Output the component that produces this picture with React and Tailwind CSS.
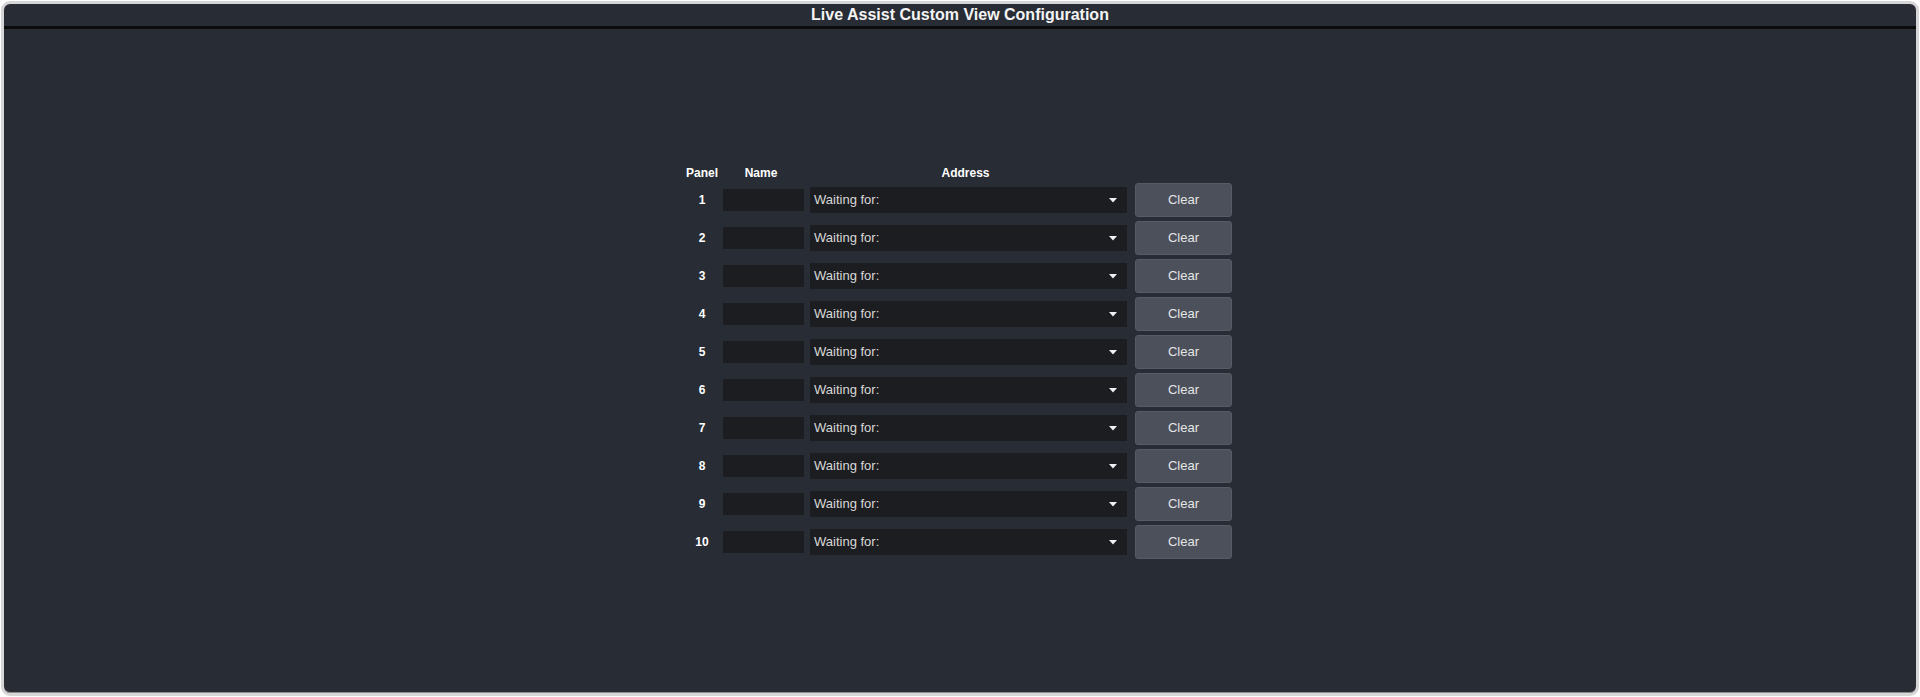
import React from 'react';

const rows = [1, 2, 3, 4, 5, 6, 7, 8, 9, 10];

function Caret() {
  return (
    <svg width="8" height="5" viewBox="0 0 8 5" className="shrink-0">
      <path d="M0 0 L8 0 L4 4.5 Z" fill="#f0f0f0" />
    </svg>
  );
}

function PanelRow({ n }) {
  return (
    <div className="flex items-center h-[34px]">
      <div className="w-[36px] text-center text-[12px] font-bold text-white">{n}</div>
      <div className="ml-[3px] w-[81px] h-[22px] bg-[#1c1d20]" />
      <div className="ml-[6px] w-[317px] h-[26px] bg-[#1c1d20] flex items-center justify-between pl-[4px] pr-[10px]">
        <span className="text-[13px] text-[#d8d8d8]">Waiting for:</span>
        <Caret />
      </div>
      <button className="ml-[8px] w-[97px] h-[34px] rounded-[3px] bg-[#4b505b] border border-[#565b66] text-[13px] text-[#e6e6e6]">
        Clear
      </button>
    </div>
  );
}

export default function App() {
  return (
    <div className="h-[697px] bg-white p-[1px]" style={{ fontFamily: '"Liberation Sans", Arial, sans-serif' }}>
      <div className="h-full rounded-[9px] border-[3px] border-[#d6d6d6] bg-[#282c34] overflow-hidden shadow-[inset_0_-1px_0_#8e8e8e] flex flex-col">
        <div className="h-[22px] leading-[22px] text-center text-[16px] font-bold text-[#f4f4f4]">
          Live Assist Custom View Configuration
        </div>
        <div className="h-[3px] bg-[#0b0b0b]" />
        <div className="flex justify-center pt-[136px] pr-[4px]">
          <div className="flex flex-col">
            <div className="flex items-center h-[18px] pb-[2px] text-[12px] font-bold text-white">
              <div className="w-[36px] text-center">Panel</div>
              <div className="ml-[3px] w-[81px] pr-[5px] text-center">Name</div>
              <div className="ml-[6px] w-[317px] pr-[6px] text-center">Address</div>
              <div className="ml-[8px] w-[97px]" />
            </div>
            <div className="flex flex-col gap-[4px]">
              {rows.map((n) => (
                <PanelRow key={n} n={n} />
              ))}
            </div>
          </div>
        </div>
      </div>
    </div>
  );
}
